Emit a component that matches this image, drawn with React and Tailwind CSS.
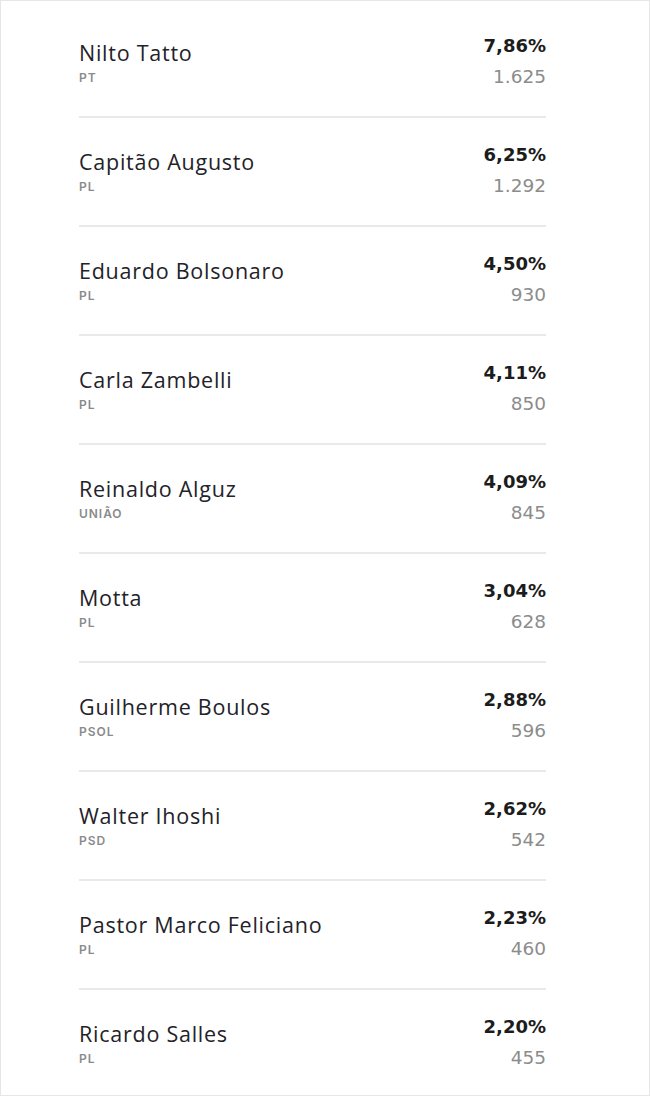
const candidates = [
  { name: "Nilto Tatto", party: "PT", pct: "7,86%", votes: "1.625" },
  { name: "Capitão Augusto", party: "PL", pct: "6,25%", votes: "1.292" },
  { name: "Eduardo Bolsonaro", party: "PL", pct: "4,50%", votes: "930" },
  { name: "Carla Zambelli", party: "PL", pct: "4,11%", votes: "850" },
  { name: "Reinaldo Alguz", party: "UNIÃO", pct: "4,09%", votes: "845" },
  { name: "Motta", party: "PL", pct: "3,04%", votes: "628" },
  { name: "Guilherme Boulos", party: "PSOL", pct: "2,88%", votes: "596" },
  { name: "Walter Ihoshi", party: "PSD", pct: "2,62%", votes: "542" },
  { name: "Pastor Marco Feliciano", party: "PL", pct: "2,23%", votes: "460" },
  { name: "Ricardo Salles", party: "PL", pct: "2,20%", votes: "455" },
];

const App = () => {
  return (
    <div className="w-[650px] h-[1096px] bg-white border border-[#e6e6e6] pt-[8px] font-['Open_Sans',sans-serif]">
      <div className="ml-[78px] w-[467px]">
        {candidates.map((c, i) => (
          <div
            key={c.name}
            className={
              i < candidates.length - 1
                ? "h-[109px] flex justify-between items-start pt-[25px] border-b-2 border-[#e9e9e9]"
                : "h-[109px] flex justify-between items-start pt-[25px]"
            }
          >
            {/* name + party */}
            <div className="mt-[5px]">
              <div className="text-[21.5px] leading-[28px] tracking-[0.035em] text-[#232229]">
                {c.name}
              </div>
              <div className="mt-[3px] font-['Inter',sans-serif] text-[12px] leading-[16px] font-semibold tracking-[0.08em] text-[#8a8a8a]">
                {c.party}
              </div>
            </div>

            {/* percent + votes */}
            <div className="text-right font-['DejaVu_Sans',sans-serif]">
              <div className="text-[18px] leading-[24px] font-bold text-[#1c1c1c]">
                {c.pct}
              </div>
              <div className="mt-[7px] text-[18.5px] leading-[24px] text-[#8c8c8c]">
                {c.votes}
              </div>
            </div>
          </div>
        ))}
      </div>
    </div>
  );
};

export default App;
